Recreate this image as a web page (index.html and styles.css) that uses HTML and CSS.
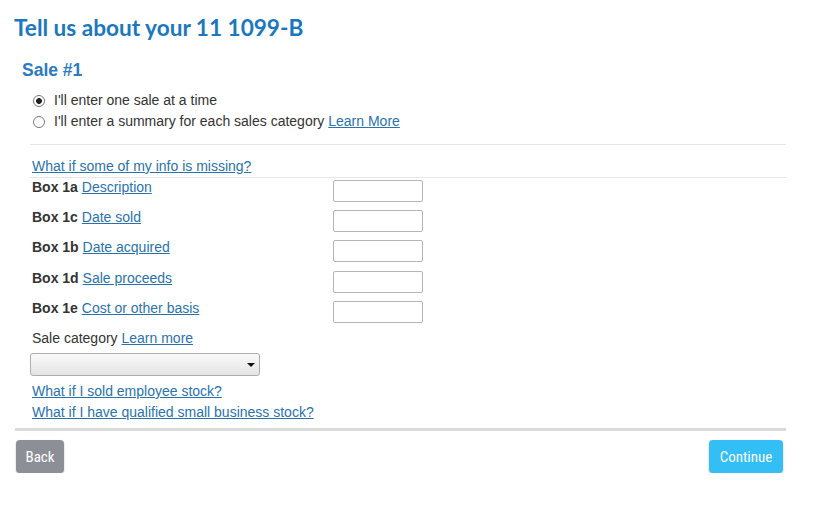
FILE: index.html
```html
<!DOCTYPE html>
<html lang="en">

<head>
	<meta charset="UTF-8">
	<meta name="viewport" content="width=device-width, initial-scale=1.0">
	<title>Tell us about your 11 1099-B</title>
	<link rel="stylesheet" href="styles.css">
</head>

<body>
	<div class="page">
		<h1>Tell us about your 11 1099-B</h1>

		<div class="sale">
			<h2>Sale #1</h2>

			<div class="choices">
				<label class="choice">
					<input type="radio" name="mode" checked>
					<span>I'll enter one sale at a time</span>
				</label>
				<label class="choice">
					<input type="radio" name="mode">
					<span>I'll enter a summary for each sales category <a href="#">Learn More</a></span>
				</label>
			</div>

			<div class="form">
				<div class="missing"><a href="#">What if some of my info is missing?</a></div>

				<div class="boxes">
					<div class="box-row">
						<div class="box-label"><b>Box 1a</b> <a href="#">Description</a></div>
						<input type="text" class="box-input">
					</div>
					<div class="box-row">
						<div class="box-label"><b>Box 1c</b> <a href="#">Date sold</a></div>
						<input type="text" class="box-input">
					</div>
					<div class="box-row">
						<div class="box-label"><b>Box 1b</b> <a href="#">Date acquired</a></div>
						<input type="text" class="box-input">
					</div>
					<div class="box-row">
						<div class="box-label"><b>Box 1d</b> <a href="#">Sale proceeds</a></div>
						<input type="text" class="box-input">
					</div>
					<div class="box-row">
						<div class="box-label"><b>Box 1e</b> <a href="#">Cost or other basis</a></div>
						<input type="text" class="box-input">
					</div>
				</div>

				<div class="category">
					<div class="category-label">Sale category <a href="#">Learn more</a></div>
					<div class="select">
						<span class="caret"></span>
					</div>
				</div>

				<div class="help-links">
					<a href="#">What if I sold employee stock?</a>
					<a href="#">What if I have qualified small business stock?</a>
				</div>
			</div>
		</div>

		<div class="actions">
			<button class="btn back">Back</button>
			<button class="btn continue">Continue</button>
		</div>
	</div>
</body>

</html>
```

FILE: styles.css
```css
*,
*:before,
*:after {
	box-sizing: border-box;
}

body {
	margin: 0;
	padding: 0;
	background-color: #fff;
	color: #333;
	font: 14px/1.2 "Liberation Sans", Arial, sans-serif;
}

a {
	color: #2a72ad;
	text-decoration: underline;
}

.page {
	width: 772px;
	margin-left: 14px;
	padding-top: 14px;
}

h1 {
	margin: 0;
	font-family: Lato, "Open Sans", sans-serif;
	font-weight: 700;
	font-size: 22.6px;
	line-height: 28px;
	color: #1b78be;
}

.sale {
	padding-left: 16px;
}

h2 {
	margin: 17px 0 0 -8px;
	font-size: 17.5px;
	line-height: 22px;
	font-weight: 700;
	color: #2c7ac2;
}

.choices {
	margin-top: 9px;
	padding-bottom: 12px;
	border-bottom: 1px solid #e6e6e6;
}

.choice {
	display: flex;
	align-items: center;
	height: 21px;
}

/* radios are drawn by hand so the ring stays light grey */
.choice input {
	appearance: none;
	width: 12px;
	height: 12px;
	margin: 0 9px 0 3px;
	border: 1px solid #777;
	border-radius: 50%;
	background: #fff;
}

.choice input:checked {
	background: radial-gradient(circle, #222 0 2.6px, #fff 3.2px);
}

.missing {
	padding: 13px 2px 2px;
	line-height: 17px;
	border-bottom: 1px solid #e6e6e6;
}

.box-row {
	display: flex;
	align-items: flex-start;
	height: 30px;
	padding-top: 2px;
}

.box-row:nth-child(3) {
	height: 31px;
}

.box-label {
	width: 303px;
	padding-left: 2px;
	line-height: 15px;
}

.box-input {
	width: 90px;
	height: 22px;
	margin: 0;
	border: 1px solid #b5b5b5;
	border-radius: 2px;
	background: #fff;
}

.category-label {
	padding-left: 2px;
	line-height: 18px;
}

.select {
	position: relative;
	width: 230px;
	height: 23px;
	margin-top: 6px;
	border: 1px solid #adadad;
	border-radius: 3px;
	background: linear-gradient(#fafafa, #e4e4e4);
}

.caret {
	position: absolute;
	right: 4px;
	top: 9px;
	border-left: 4px solid transparent;
	border-right: 4px solid transparent;
	border-top: 4px solid #111;
}

.help-links {
	display: flex;
	flex-direction: column;
	padding: 5px 2px 5px;
	line-height: 21px;
}

.actions {
	display: flex;
	justify-content: space-between;
	align-items: flex-start;
	padding: 9px 3px 0 1px;
	border-top: 3px solid #dadada;
	margin-left: 1px;
}

.btn {
	height: 33px;
	padding: 0 8px;
	border: 0;
	border-radius: 4px;
	color: #fff;
	font-family: "Liberation Sans Narrow", "Roboto Condensed", "Liberation Sans", sans-serif;
	font-size: 15px;
	box-shadow: 0 1px 2px rgba(0, 0, 0, 0.25);
}

.back {
	width: 48px;
	background-color: #8d8f97;
}

.continue {
	width: 74px;
	background-color: #33bef5;
}
```
